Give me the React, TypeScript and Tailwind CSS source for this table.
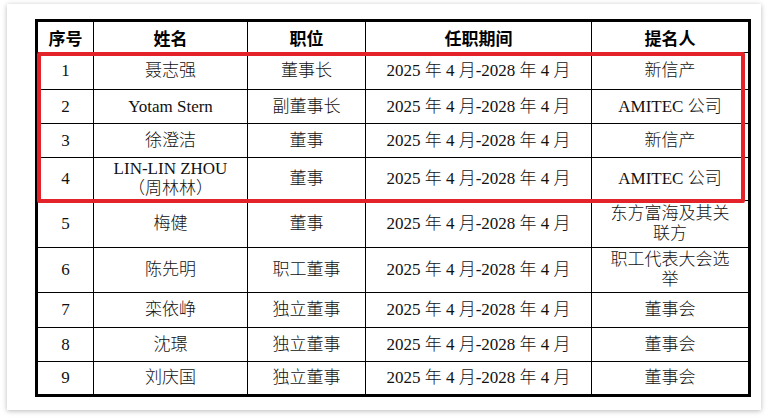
import React from "react";

type Row = { no: string; name: React.ReactNode; title: string; term: string; by: React.ReactNode; h: string };

const term = "2025 年 4 月-2028 年 4 月";

const rows: Row[] = [
  { no: "1", name: "聂志强", title: "董事长", term, by: "新信产", h: "h-[37px]" },
  { no: "2", name: "Yotam Stern", title: "副董事长", term, by: "AMITEC 公司", h: "h-[34px]" },
  { no: "3", name: "徐澄洁", title: "董事", term, by: "新信产", h: "h-[34px]" },
  {
    no: "4",
    name: (
      <>
        LIN-LIN ZHOU
        <br />
        （周林林）
      </>
    ),
    title: "董事",
    term,
    by: "AMITEC 公司",
    h: "h-[43px]",
  },
  {
    no: "5",
    name: "梅健",
    title: "董事",
    term,
    by: (
      <>
        东方富海及其关
        <br />
        联方
      </>
    ),
    h: "h-[47px]",
  },
  {
    no: "6",
    name: "陈先明",
    title: "职工董事",
    term,
    by: (
      <>
        职工代表大会选
        <br />
        举
      </>
    ),
    h: "h-[45px]",
  },
  { no: "7", name: "栾依峥", title: "独立董事", term, by: "董事会", h: "h-[35px]" },
  { no: "8", name: "沈璟", title: "独立董事", term, by: "董事会", h: "h-[34px]" },
  { no: "9", name: "刘庆国", title: "独立董事", term, by: "董事会", h: "h-[34px]" },
];

const headers = ["序号", "姓名", "职位", "任职期间", "提名人"];

export default function App() {
  return (
    <div className="w-[767px] h-[420px] bg-white pt-[4px] pl-[7px]">
      {/* 卡片 */}
      <div className="w-[754px] h-[406px] bg-white shadow-[0_1px_5px_rgba(0,0,0,0.28)] pt-[15px] pl-[28px]">
        <div className="relative w-[713px]">
          <table
            className="w-[713px] table-fixed border-collapse border-[3px] border-black text-[#111] text-[17px] text-center font-light"
            style={{ fontFamily: '"Liberation Serif", "Noto Sans CJK SC", serif' }}
          >
            <colgroup>
              <col className="w-[57px]" />
              <col className="w-[154px]" />
              <col className="w-[118px]" />
              <col className="w-[226px]" />
              <col className="w-[158px]" />
            </colgroup>
            <thead>
              <tr className="h-[32px]">
                {headers.map((t) => (
                  <th
                    key={t}
                    className="border border-black font-bold text-[17px] text-black leading-none"
                    style={{ fontFamily: '"Noto Sans CJK SC", sans-serif' }}
                  >
                    {t}
                  </th>
                ))}
              </tr>
            </thead>
            <tbody>
              {rows.map((r) => (
                <tr key={r.no} className={r.h}>
                  <td className="border border-black p-0 leading-[20px]">{r.no}</td>
                  <td className="border border-black p-0 leading-[20px]">{r.name}</td>
                  <td className="border border-black p-0 leading-[20px]">{r.title}</td>
                  <td className="border border-black p-0 leading-[20px]">{r.term}</td>
                  <td className="border border-black p-0 leading-[20px]">{r.by}</td>
                </tr>
              ))}
            </tbody>
          </table>
          {/* 红框标注 */}
          <div className="absolute left-[2px] top-[33px] w-[708px] h-[151px] border-[4px] border-[#e3222a] rounded-[2px] pointer-events-none" />
        </div>
      </div>
    </div>
  );
}
